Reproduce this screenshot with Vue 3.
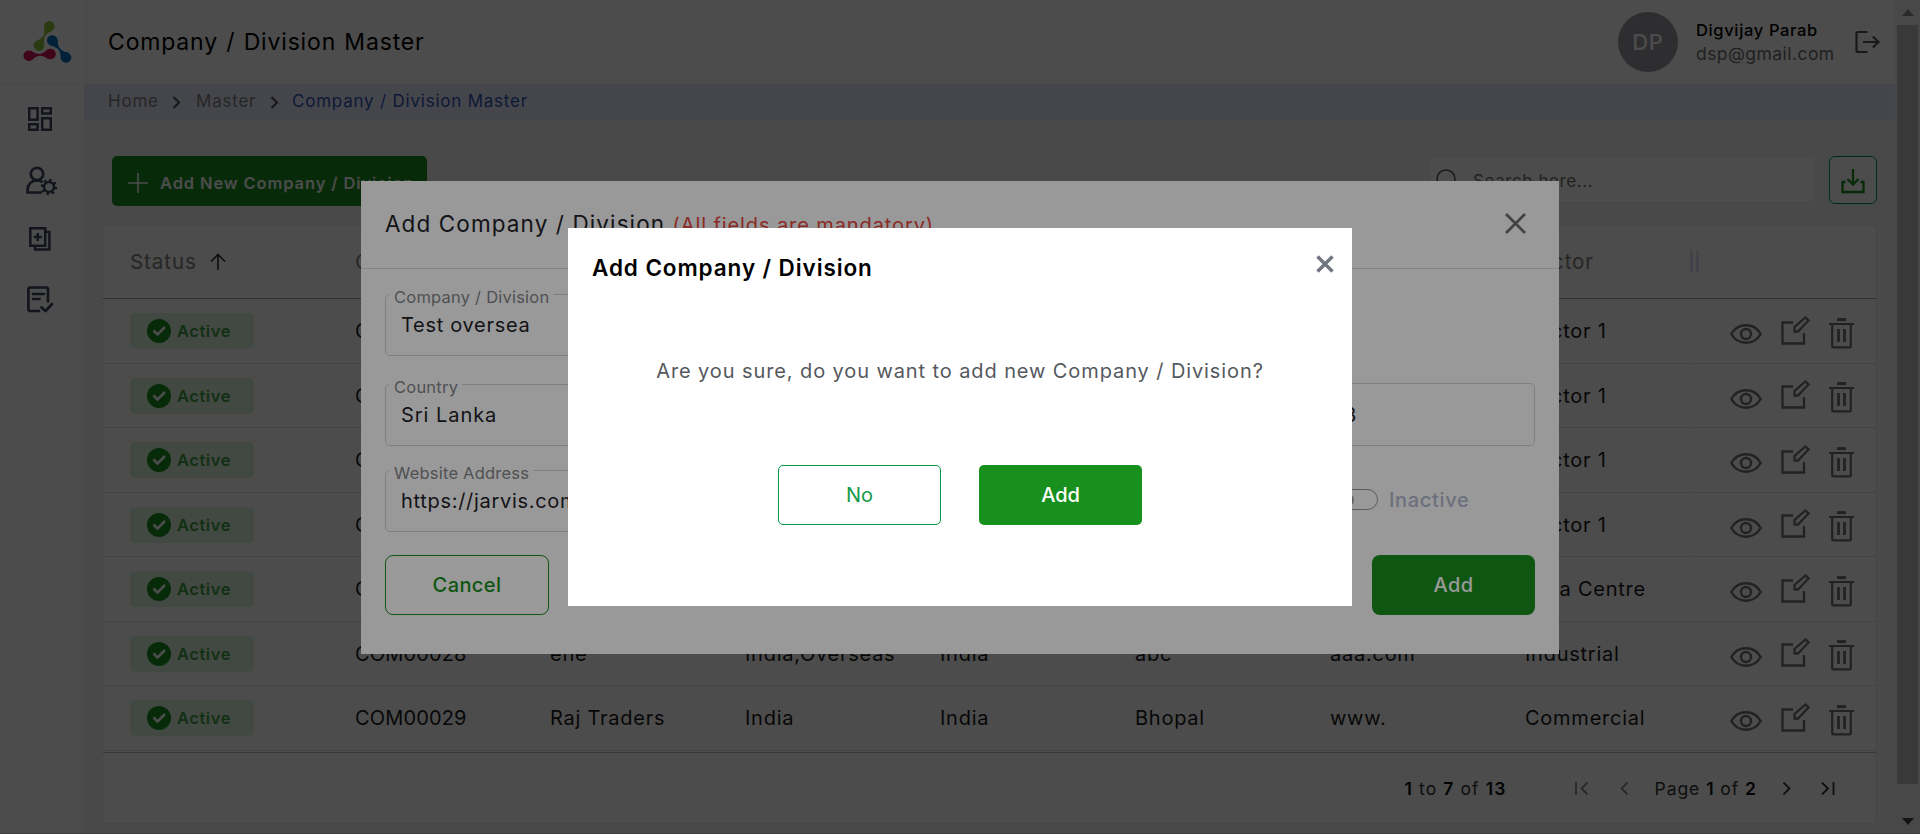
<script setup>
const rows = [
  { code: 'COM00023', cells: ['', '', '', '', ''], sector: 'Sector 1' },
  { code: 'COM00024', cells: ['', '', '', '', ''], sector: 'Sector 1' },
  { code: 'COM00025', cells: ['', '', '', '', ''], sector: 'Sector 1' },
  { code: 'COM00026', cells: ['', '', '', '', ''], sector: 'Sector 1' },
  { code: 'COM00027', cells: ['', '', '', '', ''], sector: 'Data Centre' },
  { code: 'COM00028', cells: ['ene', 'India,Overseas', 'India', 'abc', 'aaa.com'], sector: 'Industrial' },
  { code: 'COM00029', cells: ['Raj Traders', 'India', 'India', 'Bhopal', 'www.'], sector: 'Commercial' },
]

const links = [
  { color: '#8dc63f', at: 'translate(29.3 8.3) rotate(118.2)' },
  { color: '#0071bc', at: 'translate(32.3 22.5) rotate(51.2)' },
  { color: '#d4145a', at: 'translate(8.7 37.7) rotate(-4.3)' },
]
</script>

<template>
  <div class="screen">
    <div class="app">
      <aside class="sidebar">
        <div class="logo">
          <svg width="54" height="46" viewBox="0 0 54 46">
            <g v-for="l in links" :key="l.color" :fill="l.color" :transform="l.at">
              <circle cx="0" cy="0" r="5.3" /><circle cx="21.8" cy="0" r="5.3" />
              <path d="M2.5 -4.700Q7 -1 10.900 -.9Q14.800 -1 19.300 -4.700V4.700Q14.800 1 10.900 .9Q7 1 2.500 4.700Z" />
            </g>
          </svg>
        </div>
        <nav class="side-nav">
          <svg width="24" height="24" viewBox="0 0 24 24" fill="none" stroke="currentColor" stroke-width="2.500">
            <path d="M1.200 1.200h8.400v11.500H1.200zM14.200 1.200h8.600v5.400H14.200zM1.200 17.300h8.400v5.500H1.200zM14.200 11.300h8.600v11.500H14.200z" />
          </svg>
          <svg width="32" height="30" viewBox="0 0 32 30" fill="none" stroke="currentColor" stroke-width="2.700">
            <circle cx="11" cy="8" r="6.200" />
            <path d="M16 26.500H1.600v-3c0-5 3.600-9 9.400-9 2.200 0 4 .6 5.600 1.600" />
            <circle cx="23" cy="21" r="5" stroke-width="2.500" />
            <circle cx="23" cy="21" r="7" stroke-width="2.400" stroke-dasharray="2.400 3.098" />
          </svg>
          <svg width="22" height="24" viewBox="0 0 22 24" fill="none" stroke="currentColor" stroke-width="2.500">
            <path d="M1.300 1.300h14.900v17.500H1.300zM6 19v3.500h14.400V5H17M8.700 6v8M4.700 10h8" />
          </svg>
          <svg width="27" height="27" viewBox="0 0 27 27" fill="none" stroke="currentColor" stroke-width="2.700" stroke-linecap="round" stroke-linejoin="round">
            <path d="M12 25H3.300Q1.400 25 1.400 23V3.300Q1.400 1.500 3.300 1.500H19Q21 1.500 21 3.300V15.500M6 8h11M6 13h6.500M14.500 21.500l4 3.500 6.500-7" />
          </svg>
        </nav>
      </aside>

      <main class="main">
        <header class="topbar">
          <h1>Company / Division Master</h1>
          <div class="user">
            <div class="avatar">DP</div>
            <div class="who">
              <div class="name">Digvijay Parab</div>
              <div class="mail">dsp@gmail.com</div>
            </div>
            <svg class="logout" width="26" height="24" viewBox="0 0 26 24" fill="none" stroke="#555" stroke-width="2.200">
              <path d="M12.500 2H3Q1.500 2 1.500 3.500v17Q1.500 22 3 22h9.500M8 12h15.500M17.800 6.500l5.700 5.500-5.700 5.500" />
            </svg>
          </div>
        </header>

        <div class="crumbs">
          <span class="c1">Home</span>
          <svg width="9" height="13" viewBox="0 0 9 13"><path d="M1.500 1l5.500 5.500-5.500 5.500" fill="none" stroke="#555" stroke-width="2.200" /></svg>
          <span class="c2">Master</span>
          <svg width="9" height="13" viewBox="0 0 9 13"><path d="M1.500 1l5.500 5.500-5.500 5.500" fill="none" stroke="#555" stroke-width="2.200" /></svg>
          <span class="c3">Company / Division Master</span>
        </div>

        <div class="tools">
          <button class="add-new">
            <svg width="20" height="20" viewBox="0 0 20 20"><path d="M10 0v20M0 10h20" stroke="#fff" stroke-width="1.600" /></svg>
            <span>Add New Company / Division</span>
          </button>
          <div class="search">
            <svg width="26" height="26" viewBox="0 0 26 26" fill="none" stroke="#555" stroke-width="1.500"><circle cx="10" cy="10" r="9" /><path d="M16.500 16.500l8 8" /></svg>
            <span>Search here...</span>
          </div>
          <button class="download">
            <svg width="24" height="25" viewBox="0 0 24 25" fill="none" stroke="#18901d" stroke-width="2.300">
              <path d="M4.500 13H1.500v10h21V13h-3M12 0v15M6.500 10l5.500 5.500 5.500-5.500" />
            </svg>
          </button>
        </div>

        <section class="card">
          <div class="thead">
            <div class="st">Status
              <svg width="16" height="17" viewBox="0 0 16 17" fill="none" stroke="#333" stroke-width="1.700"><path d="M8 17V1.500M1 8.500l7-7 7 7" /></svg>
            </div>
            <div>Code</div>
            <div v-for="n in 5" :key="n"></div>
            <div>Sector</div>
            <div class="grip"></div>
          </div>
          <div v-for="r in rows" :key="r.code" class="row">
            <div class="data">
              <div>
                <span class="pill">
                  <svg width="24" height="24" viewBox="0 0 24 24"><circle cx="12" cy="12" r="12" fill="#18901d" /><path d="M6.500 11.500l4 4 7.500-7.500" fill="none" stroke="#fff" stroke-width="2.600" /></svg>
                  Active
                </span>
              </div>
              <div class="code">{{ r.code }}</div>
              <div v-for="(c, i) in r.cells" :key="i">{{ c }}</div>
              <div>{{ r.sector }}</div>
            </div>
            <div class="acts">
              <svg class="eye" width="32" height="20" viewBox="0 0 32 20" fill="none" stroke="currentColor" stroke-width="2.400"><path d="M1.300 10C8-1.600 24-1.600 30.700 10 24 21.600 8 21.600 1.300 10z" stroke-linejoin="round" /><circle cx="16" cy="10" r="5" /></svg>
              <svg class="edit" width="29" height="29" viewBox="0 0 29 29" fill="none" stroke="currentColor" stroke-width="2.300"><path d="M12 6.500H1.500v21h21.500V17M13.500 15.500v-4.500L24.500 1.500l3 3L17 15.500z" /></svg>
              <svg class="trash" width="25" height="31" viewBox="0 0 25 31" fill="none" stroke="currentColor" stroke-width="2.200"><path d="M8 1.600h9" stroke-width="3" /><path d="M0 6h25M3.200 6v22.400q0 1 1 1h16.600q1 0 1-1V6" /><path d="M9.500 11v13M15.500 11v13" stroke-width="2.800" /></svg>
            </div>
          </div>
          <div class="foot">
            <span class="range"><b>1</b> to <b>7</b> of <b>13</b></span>
            <svg class="f1" width="14" height="13" viewBox="0 0 14 13"><path d="M1 0v13M12.500 .5l-6 6 6 6" /></svg>
            <svg class="f2" width="9" height="13" viewBox="0 0 9 13"><path d="M7.500 .5l-6 6 6 6" /></svg>
            <span class="page">Page <b>1</b> of <b>2</b></span>
            <svg class="f3" width="9" height="13" viewBox="0 0 9 13"><path d="M1.500 .5l6 6-6 6" /></svg>
            <svg class="f4" width="14" height="13" viewBox="0 0 14 13"><path d="M1 .5l6 6-6 6M12.500 0v13" /></svg>
          </div>
        </section>
      </main>

      <div class="scroll">
        <svg width="12" height="7" viewBox="0 0 12 7"><path d="M0 7L6 0l6 7z" fill="#8a8a8a" /></svg>
        <div class="thumb"></div>
        <svg width="12" height="7" viewBox="0 0 12 7"><path d="M0 0l6 7 6-7z" fill="#404040" /></svg>
      </div>
    </div>

    <div class="shade form-shade"></div>
    <div class="modal">
      <div class="modal-head">
        <h2>Add Company / Division <small>(All fields are mandatory)</small></h2>
        <svg width="21" height="21" viewBox="0 0 21 21"><path d="M1 1l19 19M20 1L1 20" stroke="#707070" stroke-width="2.800" /></svg>
      </div>
      <div class="modal-body">
        <div class="frow r1">
          <fieldset><legend class="l1">Company / Division</legend><span>Test oversea</span></fieldset>
        </div>
        <div class="frow r2">
          <fieldset><legend class="l2">Country</legend><span class="v2">Sri Lanka</span></fieldset>
          <i></i>
          <div class="box">3</div>
        </div>
        <div class="frow r3">
          <fieldset><legend class="l3">Website Address</legend><span>https://jarvis.com</span></fieldset>
          <i></i>
          <div class="toggle-line"><span class="toggle"><em></em></span><span class="inactive">Inactive</span></div>
        </div>
        <div class="modal-foot">
          <button class="cancel">Cancel</button>
          <button class="add">Add</button>
        </div>
      </div>
    </div>

    <div class="shade confirm-shade"></div>
    <div class="confirm">
      <div class="confirm-head">
        <h3>Add Company / Division</h3>
        <svg width="18" height="18" viewBox="0 0 18 18"><path d="M1.500 1.500l15 15M16.500 1.500l-15 15" stroke="#70757f" stroke-width="3.400" /></svg>
      </div>
      <p>Are you sure, do you want to add new Company / Division?</p>
      <div class="confirm-foot">
        <button class="no">No</button>
        <button class="yes">Add</button>
      </div>
    </div>
  </div>
</template>

<style>
html, body { overflow: hidden; background: #fff; }
</style>

<style scoped>
* { box-sizing: border-box; margin: 0; }
svg { display: block; flex: none; }
button { font: inherit; padding: 0; border: 0; background: none; letter-spacing: inherit; }
.screen { position: relative; width: 1920px; height: 834px; overflow: hidden; font-family: Inter, "Liberation Sans", sans-serif; font-size: 20px; color: #1b1b20; letter-spacing: .7px; white-space: nowrap; }
.app { display: flex; height: 834px; background: #f5f5f5; border-bottom: 1px solid #d6cfd2; }
.sidebar { width: 84px; background: #fff; flex: none; }
.logo { height: 84px; width: 80px; border-bottom: 1px solid #ececec; padding: 18px 0 0 20px; }
.side-nav { display: flex; flex-direction: column; color: #3d465c; padding: 23px 0 0 28px; }
.side-nav svg:nth-child(2) { margin: 35px 0 0 -2px; }
.side-nav svg:nth-child(3) { margin: 31px 0 0 1px; }
.side-nav svg:nth-child(4) { margin: 35px 0 0 -1px; }
.main { width: 1811px; flex: none; }
.topbar { height: 84px; background: #fff; border-left: 4px solid #f8f8f8; padding: 0 14px 0 20px; display: flex; align-items: center; justify-content: space-between; }
h1 { font-size: 23px; font-weight: 400; color: #000; letter-spacing: .83px; word-spacing: 1px; }
.user { display: flex; align-items: center; }
.avatar { width: 60px; height: 60px; border-radius: 50%; background: #9d9da3; color: #fff; text-align: center; line-height: 60px; font-size: 22px; font-weight: 500; }
.who { width: 177px; padding-left: 18px; line-height: 24px; font-size: 17.500px; letter-spacing: .45px; }
.name { color: #000; font-weight: 500; font-size: 16.500px; letter-spacing: .65px; }
.mail { color: #707070; }
.crumbs { height: 36px; background: #e8ebfa; display: flex; align-items: center; padding: 0 0 2px 24px; font-size: 17px; color: #808080; letter-spacing: .78px; }
.crumbs svg { position: relative; top: 1px; }
.c1 { width: 64px; } .c2 { width: 74px; margin-left: 15px; } .c3 { color: #3056b8; margin-left: 13px; }
.tools { display: flex; padding: 36px 18px 0 28px; height: 105px; }
.add-new { width: 315px; height: 50px; border-radius: 5px; background: #18901d; color: #fff; font-weight: 600; font-size: 16.500px; letter-spacing: .88px; display: flex; align-items: center; gap: 12px; padding: 4px 0 0 16px; }
.search { margin-left: auto; width: 386px; height: 47px; border: 1px solid #efefef; border-radius: 5px; background: #fff; display: flex; color: #757575; font-size: 17px; letter-spacing: .6px; padding: 12px 0 0 6px; gap: 11px; line-height: 24px; }
.download { margin-left: 14px; width: 48px; height: 48px; border: 1.500px solid #009a44; border-radius: 6px; background: #fff; display: flex; align-items: center; justify-content: center; padding-top: 2px; }
.card { margin: 0 18px; height: 599px; background: #fff; border: 1px solid #ebebeb; }
.thead { height: 73px; border-bottom: 1px solid #a0a0a0; padding-bottom: 1px; }
.thead, .data { display: grid; padding-left: 27px; align-items: center; }
.thead { grid-template-columns: 225px repeat(6, 195px) 165px 10px; color: #808080; font-size: 20.500px; letter-spacing: .95px; }
.st { display: flex; align-items: center; gap: 13px; }
.grip { height: 21px; width: 9px; border: solid #dfe0f0; border-width: 0 3px; }
.row { display: flex; height: 64.500px; gap: 2px; }
.data { width: 1590px; grid-template-columns: 225px repeat(6, 195px) 165px; border-bottom: 1px solid #e2e2e2; padding-top: 1px; letter-spacing: .75px; }
.data .code { letter-spacing: .15px; }
.pill { display: flex; align-items: center; gap: 6px; width: 124px; height: 36px; border-radius: 5px; background: #dcf5de; color: #43a047; font-weight: 600; font-size: 16.500px; letter-spacing: .55px; padding-left: 17px; }
.acts { flex: 1; border-bottom: 1px solid #e2e2e2; display: flex; padding: 16.500px 0 0 34.500px; color: #6f7378; }
.eye { margin: 8.500px 19px 0 0; } .edit { margin-right: 19px; } .trash { margin-top: 2px; }
.foot { margin-top: 1px; border-top: 1px solid #b8b8b8; height: 72px; display: flex; align-items: center; font-size: 17.500px; color: #333; letter-spacing: .95px; }
.foot svg { fill: none; stroke: #333; stroke-width: 1.800; }
.foot b { font-weight: 600; color: #111; }
.range { width: 170px; margin-left: 1301.500px; letter-spacing: 1.100px; }
.foot .f1, .foot .f2 { stroke: #888; }
.f2 { margin-left: 31px; } .page { margin-left: 26px; width: 127px; } .f4 { margin-left: 30px; }
.scroll { width: 25px; background: #f1f1f1; display: flex; flex-direction: column; align-items: center; padding-top: 9px; }
.thumb { width: 21px; height: 759px; margin: 9px 0 34px; background: #c1c1c1; }
.shade { position: absolute; inset: 0; }
.form-shade { background: rgba(0, 0, 0, .5); }
.confirm-shade { background: rgba(0, 0, 0, .4); }
.modal { position: absolute; left: 361px; top: 181px; width: 1198px; height: 473px; background: #fff; color: #1f2328; }
.modal-head { height: 88px; border-bottom: 1px solid #dedede; padding: 0 33px 2px 24px; display: flex; align-items: center; justify-content: space-between; }
h2 { font-size: 22.500px; font-weight: 400; letter-spacing: 1.100px; }
h2 small { font-size: 20px; color: #e8453c; letter-spacing: .9px; }
.modal-body { padding: 0 24px; }
.frow { display: grid; grid-template-columns: 367px 1fr 367px; }
fieldset { border: 1px solid #d4d4d4; border-radius: 5px; height: 72px; padding: 0 0 0 15px; }
legend { position: relative; top: 3px; font-size: 16.500px; line-height: 20px; color: #85878c; padding: 0 5px; margin-left: -12px; letter-spacing: .22px; }
.l1 { width: 165px; } .l2 { width: 73px; } .l3 { width: 144px; }
fieldset span { display: block; line-height: 24px; margin-top: 9px; }
fieldset .v2 { letter-spacing: .95px; }
.r1 { padding-top: 15px; }
.r2 { padding-top: 18px; }
.r3 { padding-top: 14px; }
.box { border: 1px solid #d4d4d4; border-radius: 5px; height: 63px; margin-top: 9px; line-height: 62px; padding-left: 175px; }
.toggle-line { display: flex; align-items: center; padding: 7px 0 0 168px; }
.toggle { width: 42px; height: 21px; border: 1px solid #999; border-radius: 11px; padding: 3px; }
.toggle em { display: block; width: 14px; height: 14px; border-radius: 50%; background: #a5a5a5; }
.inactive { margin-left: 11px; color: #b5bad0; font-weight: 500; letter-spacing: .65px; }
.modal-foot { display: flex; justify-content: space-between; padding-top: 23px; }
.modal-foot button { width: 164px; height: 60px; border-radius: 8px; font-weight: 500; letter-spacing: .4px; }
.cancel { border: 1px solid #18901d; color: #18901d; }
.modal-foot .add { background: #18901d; color: #fff; width: 163px; }
.confirm { position: absolute; left: 568px; top: 228px; width: 784px; height: 378px; background: #fff; }
.confirm-head { display: flex; justify-content: space-between; padding: 27px 18px 0 24px; }
h3 { font-size: 22.500px; line-height: 27px; font-weight: 600; color: #000; letter-spacing: .9px; position: relative; top: -1px; }
.confirm p { text-align: center; margin-top: 75px; line-height: 28px; color: #55595e; letter-spacing: .9px; }
.confirm-foot { display: flex; justify-content: center; gap: 38px; margin-top: 80px; }
.confirm-foot button { width: 163px; height: 60px; border-radius: 5px; letter-spacing: 0; }
.no { border: 1px solid #009a44; color: #139a48; }
.yes { background: #18901d; color: #fff; }
.confirm-foot .yes { font-weight: 500; }
</style>
